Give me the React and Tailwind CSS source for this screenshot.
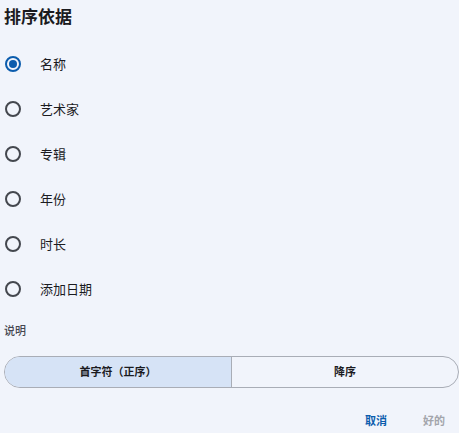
import React, { useState } from "react";

const options = ["名称", "艺术家", "专辑", "年份", "时长", "添加日期"];

const Radio = ({ checked }) => (
  <span
    className={`flex h-[16px] w-[16px] items-center justify-center rounded-full border-2 ${
      checked ? "border-[#0b5cad]" : "border-[#44474e]"
    }`}
  >
    {checked && <span className="h-[8px] w-[8px] rounded-full bg-[#0b5cad]" />}
  </span>
);

const App = () => {
  const [sortBy, setSortBy] = useState(0);
  const [order, setOrder] = useState("asc");

  return (
    <div
      className="h-[433px] w-[459px] bg-[#f1f4fb] text-[#1b1b1f]"
      style={{ fontFamily: '"Noto Sans", "Noto Sans CJK SC", sans-serif' }}
    >
      <h1 className="pl-[4px] pt-[5px] text-[17px] font-bold leading-[24px]">排序依据</h1>

      <div className="mt-[12px] flex flex-col">
        {options.map((label, i) => (
          <button
            key={label}
            className="flex h-[45px] items-center text-left"
            onClick={() => setSortBy(i)}
          >
            <span className="ml-[5px] w-[35px]">
              <Radio checked={sortBy === i} />
            </span>
            <span className="text-[13px] leading-[16px] text-[#1b1b1f]">{label}</span>
          </button>
        ))}
      </div>

      <div className="mt-[12px] pl-[4px] text-[11px] font-medium leading-[15px] text-[#45464f]">说明</div>

      <div className="ml-[4px] mt-[18px] flex h-[32px] w-[455px] overflow-hidden rounded-full border border-[#a9adb6]">
        <button
          className={`flex-1 text-[11px] font-bold ${order === "asc" ? "bg-[#d6e3f6]" : ""}`}
          onClick={() => setOrder("asc")}
        >
          首字符（正序）
        </button>
        <div className="w-px bg-[#a9adb6]" />
        <button
          className={`flex-1 text-[11px] font-bold ${order === "desc" ? "bg-[#d6e3f6]" : ""}`}
          onClick={() => setOrder("desc")}
        >
          降序
        </button>
      </div>

      <div className="mt-[25px] flex justify-end gap-[36px] pr-[14px] text-[11px] font-bold">
        <button className="text-[#0b5cad]">取消</button>
        <button className="text-[#a3a5ab]">好的</button>
      </div>
    </div>
  );
};

export default App;
